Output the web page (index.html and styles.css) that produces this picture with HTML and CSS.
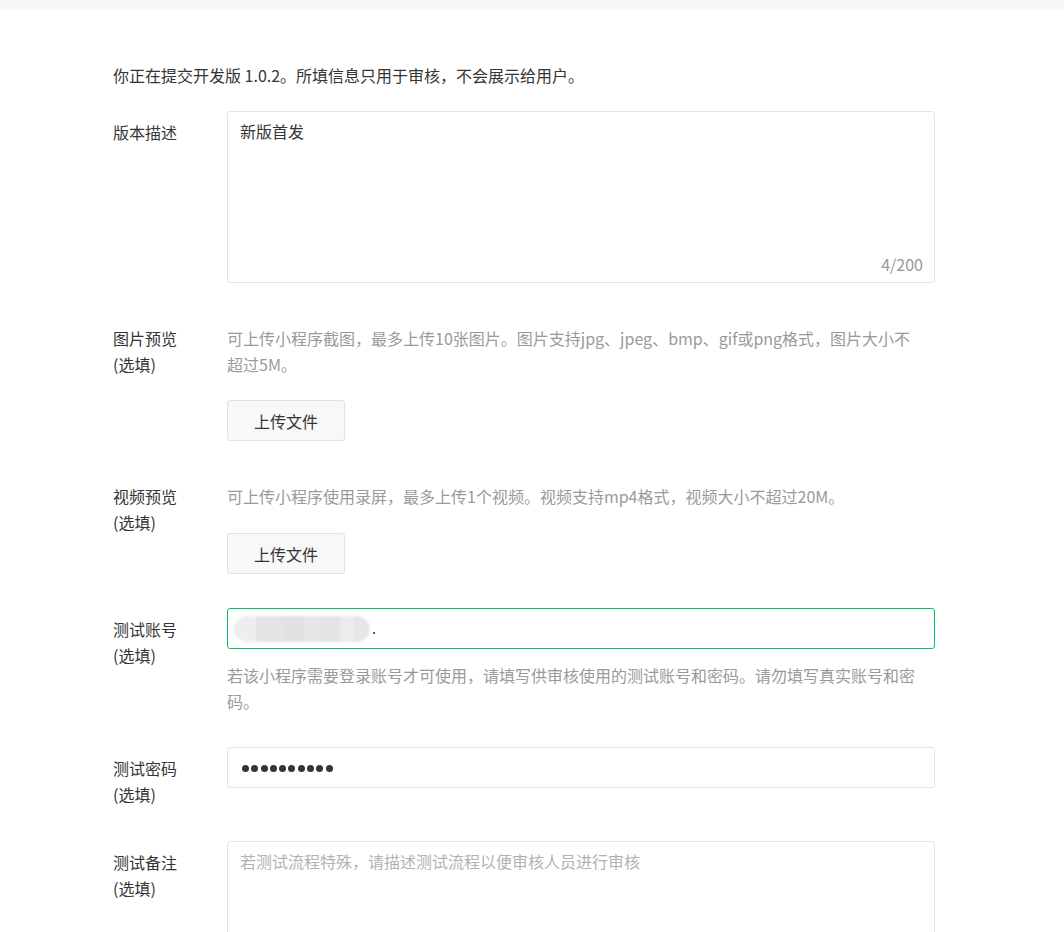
FILE: index.html
```html
<!DOCTYPE html>
<html lang="zh-CN">
<head>
<meta charset="utf-8">
<title>提交审核</title>
<link rel="stylesheet" href="styles.css">
</head>
<body>
<div class="topbar"></div>
<main class="form">
  <p class="intro">你正在提交开发版 1.0.2。所填信息只用于审核，不会展示给用户。</p>

  <div class="row row-desc">
    <div class="label">版本描述</div>
    <div class="field">
      <div class="textarea">
        <div class="ta-text">新版首发</div>
        <div class="counter">4/200</div>
      </div>
    </div>
  </div>

  <div class="row row-img">
    <div class="label">图片预览<br>(选填)</div>
    <div class="field">
      <p class="tip tip-img">可上传小程序截图，最多上传10张图片。图片支持jpg、jpeg、bmp、gif或png格式，图片大小不超过5M。</p>
      <button class="btn btn-img">上传文件</button>
    </div>
  </div>

  <div class="row row-video">
    <div class="label">视频预览<br>(选填)</div>
    <div class="field">
      <p class="tip">可上传小程序使用录屏，最多上传1个视频。视频支持mp4格式，视频大小不超过20M。</p>
      <button class="btn btn-video">上传文件</button>
    </div>
  </div>

  <div class="row row-account">
    <div class="label">测试账号<br>(选填)</div>
    <div class="field">
      <div class="input input-focus">
        <div class="blur">
          <span class="b b1"></span><span class="b b2"></span><span class="b b3"></span><span class="b b4"></span><span class="b b5"></span><span class="b b6"></span><span class="b b7"></span>
        </div>
        <span class="caret-dot"></span>
      </div>
      <p class="tip tip-after">若该小程序需要登录账号才可使用，请填写供审核使用的测试账号和密码。请勿填写真实账号和密码。</p>
    </div>
  </div>

  <div class="row row-pwd">
    <div class="label">测试密码<br>(选填)</div>
    <div class="field">
      <div class="input">
        <div class="dots"><i></i><i></i><i></i><i></i><i></i><i></i><i></i><i></i><i></i><i></i></div>
      </div>
    </div>
  </div>

  <div class="row row-note">
    <div class="label">测试备注<br>(选填)</div>
    <div class="field">
      <div class="textarea">
        <div class="ta-text placeholder">若测试流程特殊，请描述测试流程以便审核人员进行审核</div>
      </div>
    </div>
  </div>
</main>
</body>
</html>
```

FILE: styles.css
```css
* { box-sizing: border-box; }
html, body {
  margin: 0;
  padding: 0;
  background: #fff;
  overflow: hidden;
}
body {
  font-family: "Noto Sans CJK SC", "Liberation Sans", sans-serif;
  font-size: 16px;
  line-height: 26px;
  color: #353535;
}
.topbar {
  height: 10px;
  background: #f6f7f9;
}
.form {
  padding-left: 113px;
  width: 935px;
}
.intro {
  margin: 52px 0 23px;
}
.row {
  display: flex;
}
.label {
  width: 114px;
  flex: none;
  padding-top: 8px;
}
.field {
  flex: 1;
  min-width: 0;
}
.textarea {
  position: relative;
  height: 172px;
  border: 1px solid #e4e4e7;
  border-radius: 3px;
  padding: 6px 12px;
}
.ta-text { color: #353535; }
.placeholder { color: #b2b2b2; }
.counter {
  position: absolute;
  right: 11px;
  bottom: 5px;
  color: #9a9a9a;
}
.row-desc { margin-bottom: 42px; }
.row-img .label, .row-video .label { padding-top: 0; }
.tip {
  margin: 0;
  color: #9a9a9a;
}
.tip-img { padding-right: 14px; }
.btn {
  display: block;
  width: 118px;
  height: 41px;
  border: 1px solid #e2e2e2;
  border-radius: 3px;
  background: #f8f8f8;
  font-family: inherit;
  font-size: 16px;
  color: #353535;
  padding: 0;
}
.btn-img { margin-top: 23px; }
.row-img { margin-bottom: 42px; }
.btn-video { margin-top: 24px; }
.row-video { margin-bottom: 34px; }
.input {
  position: relative;
  height: 41px;
  border: 1px solid #e4e4e7;
  border-radius: 3px;
  padding: 0 12px;
  display: flex;
  align-items: center;
}
.input-focus { border-color: #07c160; }
.blur {
  display: flex;
  margin-left: -6px;
  height: 26px;
  border-radius: 13px;
  overflow: hidden;
  filter: blur(1.2px);
}
.b { display: block; height: 26px; }
.b1 { width: 22px; background: #eeeeee; }
.b2 { width: 28px; background: #e4e4e4; }
.b3 { width: 20px; background: #e2e2e2; }
.b4 { width: 16px; background: #e6e6e6; }
.b5 { width: 20px; background: #e3e4e6; }
.b6 { width: 14px; background: #ececec; }
.b7 { width: 16px; background: #e6e6e6; border-radius: 0 13px 13px 0; }
.caret-dot {
  width: 2px;
  height: 2px;
  background: #3a5ea8;
  margin-left: 3px;
  margin-top: 8px;
}
.tip-after { margin-top: 13px; }
.row-account { margin-bottom: 33px; }
.dots {
  display: flex;
  gap: 2.3px;
  margin-left: 2px;
  margin-top: 2px;
}
.dots i {
  display: block;
  width: 7px;
  height: 7px;
  border-radius: 50%;
  background: #353535;
}
.row-pwd { margin-bottom: 34px; }
```
